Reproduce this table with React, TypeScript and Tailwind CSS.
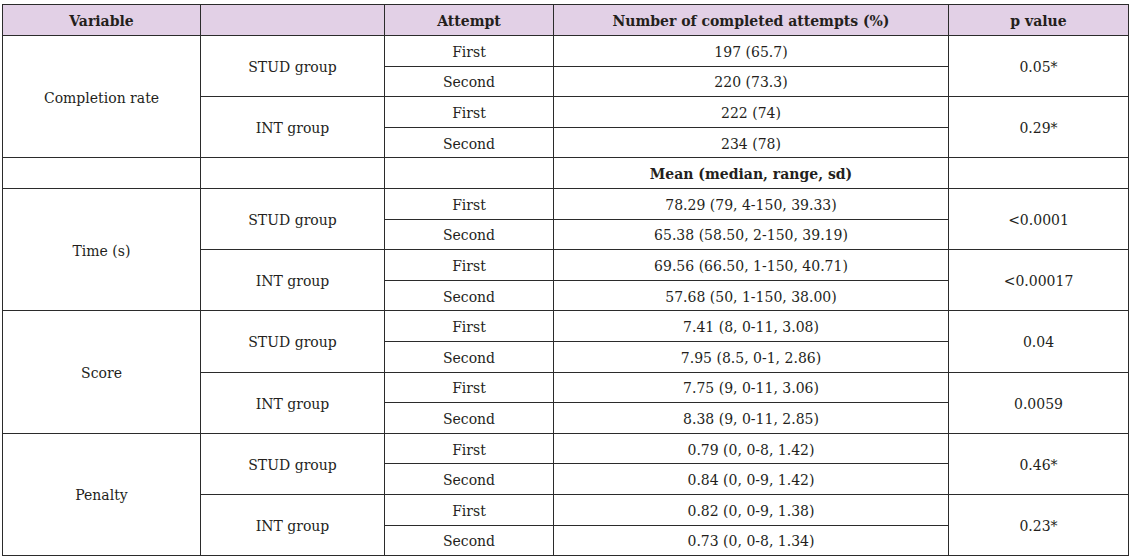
const rows = [
  {
    variable: 'Completion rate',
    groups: [
      { name: 'STUD group', first: '197 (65.7)', second: '220 (73.3)', p: '0.05*' },
      { name: 'INT group', first: '222 (74)', second: '234 (78)', p: '0.29*' },
    ],
  },
  {
    variable: 'Time (s)',
    groups: [
      { name: 'STUD group', first: '78.29 (79, 4-150, 39.33)', second: '65.38 (58.50, 2-150, 39.19)', p: '<0.0001' },
      { name: 'INT group', first: '69.56 (66.50, 1-150, 40.71)', second: '57.68 (50, 1-150, 38.00)', p: '<0.00017' },
    ],
  },
  {
    variable: 'Score',
    groups: [
      { name: 'STUD group', first: '7.41 (8, 0-11, 3.08)', second: '7.95 (8.5, 0-1, 2.86)', p: '0.04' },
      { name: 'INT group', first: '7.75 (9, 0-11, 3.06)', second: '8.38 (9, 0-11, 2.85)', p: '0.0059' },
    ],
  },
  {
    variable: 'Penalty',
    groups: [
      { name: 'STUD group', first: '0.79 (0, 0-8, 1.42)', second: '0.84 (0, 0-9, 1.42)', p: '0.46*' },
      { name: 'INT group', first: '0.82 (0, 0-9, 1.38)', second: '0.73 (0, 0-8, 1.34)', p: '0.23*' },
    ],
  },
];

const td = 'border border-[#2b2b2b] text-center align-middle px-0 pt-[3px] pb-0';

export default function App() {
  return (
    <div className="bg-white w-[1129px] h-[556px] pt-[4px] pl-[2px] font-['DejaVu_Serif',serif] text-[14px] text-[#241f1c]">
      <table className="border-collapse table-fixed w-[1126px]">
        <colgroup>
          <col className="w-[198px]" />
          <col className="w-[184px]" />
          <col className="w-[169px]" />
          <col className="w-[395px]" />
          <col className="w-[180px]" />
        </colgroup>
        <thead>
          <tr className="h-[31px] bg-[#e2d0e6] font-bold">
            <th className={td}>Variable</th>
            <th className={td}></th>
            <th className={td}>Attempt</th>
            <th className={td}>Number of completed attempts (%)</th>
            <th className={td}>p value</th>
          </tr>
        </thead>
        <tbody>
          {rows.map((r, i) => (
            <>
              {i === 1 && (
                <tr key="mean" className="h-[30.6px]">
                  <td className={td}></td>
                  <td className={td}></td>
                  <td className={td}></td>
                  <td className={`${td} font-bold`}>Mean (median, range, sd)</td>
                  <td className={td}></td>
                </tr>
              )}
              {r.groups.map((g, j) => (
                <>
                  <tr key={`${i}-${j}-a`} className="h-[30.6px]">
                    {j === 0 && (
                      <td rowSpan={4} className={td}>
                        {r.variable}
                      </td>
                    )}
                    <td rowSpan={2} className={td}>
                      {g.name}
                    </td>
                    <td className={td}>First</td>
                    <td className={td}>{g.first}</td>
                    <td rowSpan={2} className={td}>
                      {g.p}
                    </td>
                  </tr>
                  <tr key={`${i}-${j}-b`} className="h-[30.6px]">
                    <td className={td}>Second</td>
                    <td className={td}>{g.second}</td>
                  </tr>
                </>
              ))}
            </>
          ))}
        </tbody>
      </table>
    </div>
  );
}
